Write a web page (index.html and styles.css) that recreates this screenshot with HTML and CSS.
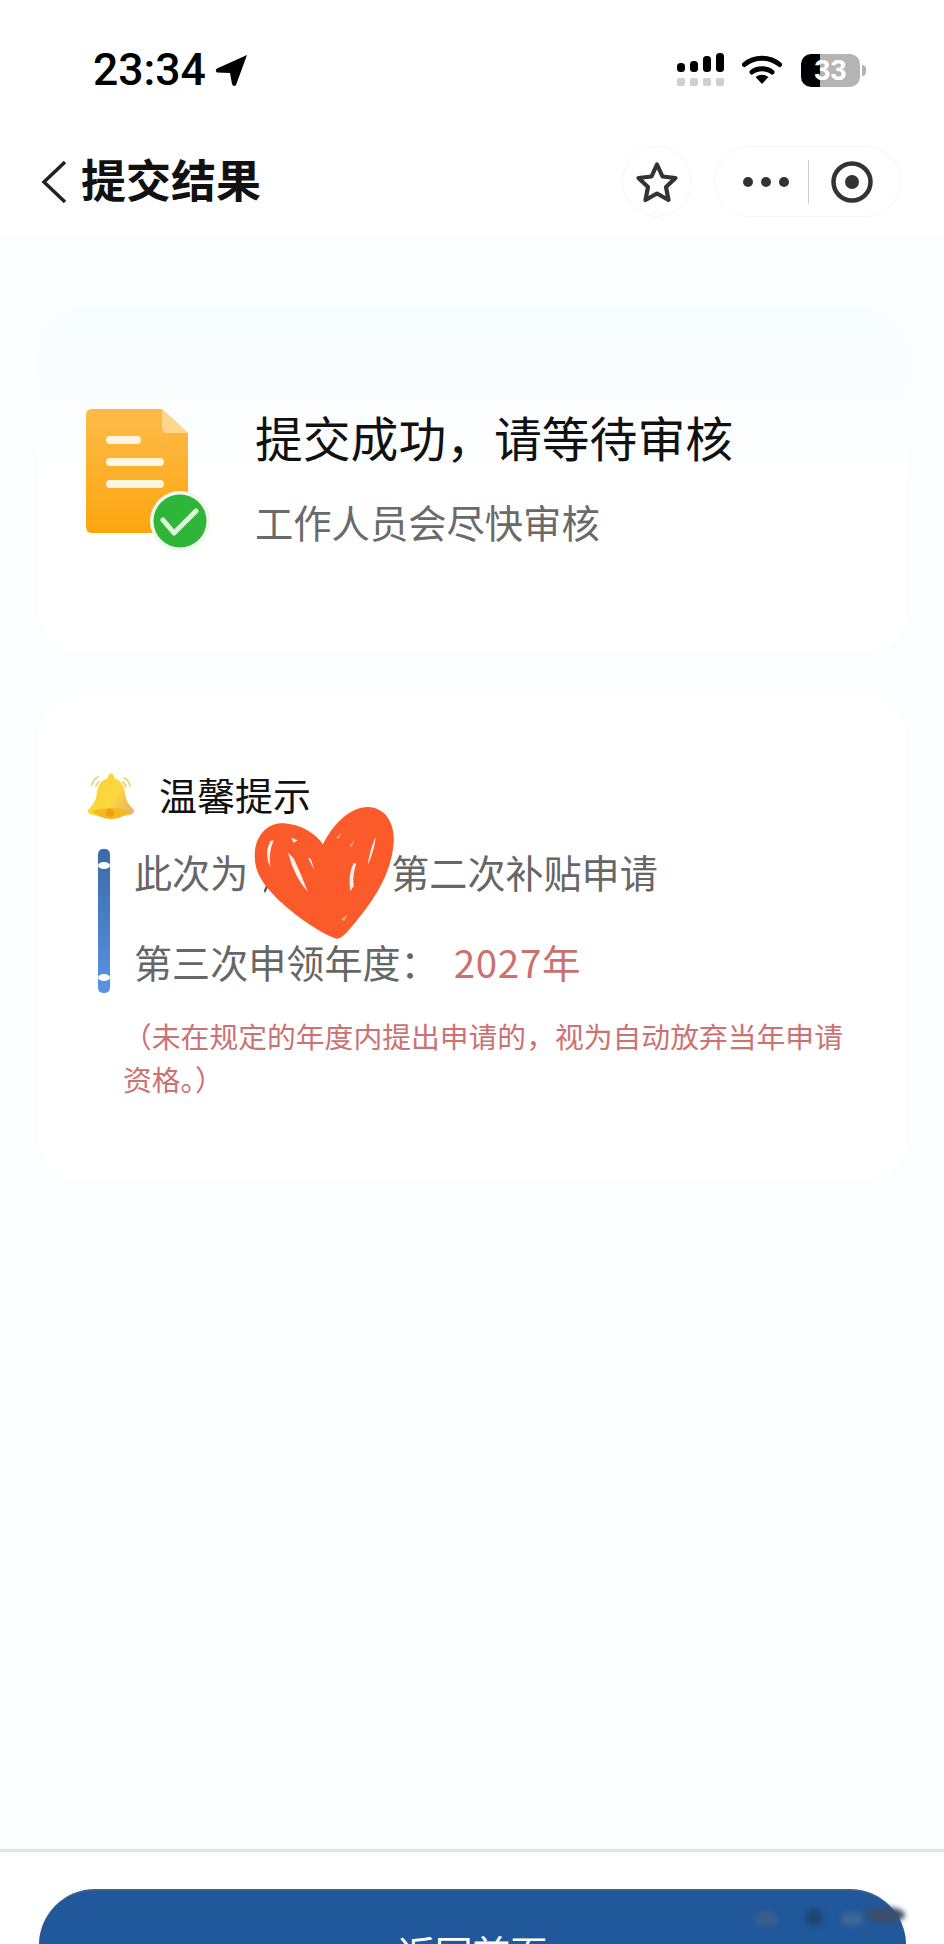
FILE: index.html
```html
<!DOCTYPE html>
<html lang="zh-CN">
<head>
<meta charset="utf-8">
<title>提交结果</title>
<link rel="stylesheet" href="styles.css">
</head>
<body>
<div class="page">
  <header class="top">
    <div class="status">
      <div class="clock">
        <span class="time">23:34</span>
        <svg class="arrow" width="33" height="33" viewBox="0 0 33 33"><path d="M32 1 L21 31 Q18.500 33.500 17 30 L15 19 L2 18.500 Q-0.500 16.500 2 14.500 Z" fill="#000"/></svg>
      </div>
      <div class="indicators">
        <svg class="signal" width="48" height="34" viewBox="0 0 48 34">
          <rect x="0" y="10" width="8" height="9" rx="3.500" fill="#000"/>
          <rect x="13" y="8" width="8" height="11" rx="3.500" fill="#000"/>
          <rect x="26" y="3" width="8" height="16" rx="3.500" fill="#000"/>
          <rect x="39" y="0" width="8" height="19" rx="3.500" fill="#000"/>
          <rect x="0" y="25" width="8" height="8" rx="2" fill="#cfcfcf"/>
          <rect x="13" y="25" width="8" height="8" rx="2" fill="#cfcfcf"/>
          <rect x="26" y="25" width="8" height="8" rx="2" fill="#cfcfcf"/>
          <rect x="39" y="25" width="8" height="8" rx="2" fill="#cfcfcf"/>
        </svg>
        <svg class="wifi" width="40" height="30" viewBox="0 0 40 30">
          <path d="M2.500 9.500 C12 1 28 1 37.500 9.500" fill="none" stroke="#000" stroke-width="5" stroke-linecap="round"/>
          <path d="M10 17 C15 12.500 25 12.500 30 17" fill="none" stroke="#000" stroke-width="5" stroke-linecap="round"/>
          <path d="M13.500 22 Q20 17.500 26.500 22 L20 29 Z" fill="#000"/>
        </svg>
        <div class="battery"><span class="battery-level">33</span></div>
        <span class="battery-nub"></span>
      </div>
    </div>
    <nav class="nav">
      <svg class="back" width="26" height="44" viewBox="0 0 26 44"><path d="M24 2 L3 22 L24 42" fill="none" stroke="#222" stroke-width="3.500"/></svg>
      <h1 class="nav-title">提交结果</h1>
      <div class="fav">
        <svg width="44" height="42" viewBox="0 0 44 42"><path d="M22 3.500 L27.500 15.500 L40.500 17 L31 26 L33.500 39 L22 32.500 L10.500 39 L13 26 L3.500 17 L16.500 15.500 Z" fill="none" stroke="#333" stroke-width="4.200" stroke-linejoin="round"/></svg>
      </div>
      <div class="capsule">
        <span class="dots"><i></i><i></i><i></i></span>
        <span class="divider"></span>
        <svg width="42" height="42" viewBox="0 0 42 42"><circle cx="21" cy="21" r="18.500" fill="none" stroke="#333" stroke-width="4.500"/><circle cx="21" cy="21" r="7" fill="#333"/></svg>
      </div>
    </nav>
  </header>

  <main class="main">
    <section class="card card-result">
      <svg class="doc" width="126" height="146" viewBox="0 0 126 146">
        <defs>
          <linearGradient id="docFill" x1="0" y1="0" x2="0" y2="1">
            <stop offset="0" stop-color="#fdbb49"/>
            <stop offset="1" stop-color="#fda60f"/>
          </linearGradient>
        </defs>
        <path d="M6 1 H76 L102 25 V119 Q102 125 96 125 H6 Q0 125 0 119 V7 Q0 1 6 1 Z" fill="url(#docFill)"/>
        <path d="M76 1 L102 25 H82 Q76 25 76 19 Z" fill="#fdd78e"/>
        <rect x="20" y="28" width="35" height="8" rx="4" fill="#fff6e2"/>
        <rect x="20" y="50" width="58" height="8" rx="4" fill="#fff6e2"/>
        <rect x="20" y="72" width="58" height="8" rx="4" fill="#fff6e2"/>
        <circle cx="94" cy="113" r="30" fill="#eef9ec"/>
        <circle cx="94" cy="113" r="26.500" fill="#2fb53a"/>
        <path d="M77 112 L88 125 L110 103" fill="none" stroke="#dff5dc" stroke-width="5" stroke-linecap="round" stroke-linejoin="round"/>
      </svg>
      <div class="result-text">
        <h2 class="result-title">提交成功&#xFF0C;请等待审核</h2>
        <p class="result-sub">工作人员会尽快审核</p>
      </div>
    </section>

    <section class="card card-tip">
      <div class="tip-head">
        <svg width="48" height="48" viewBox="0 0 48 48">
          <defs>
            <linearGradient id="bellFill" x1="0" y1="0" x2="1" y2="0.600">
              <stop offset="0" stop-color="#fbd02c"/>
              <stop offset="0.650" stop-color="#fcd83f"/>
              <stop offset="1" stop-color="#ecb860"/>
            </linearGradient>
          </defs>
          <path d="M24 0.500 Q27 0.500 27 5 Q37 8 38 20 Q39 30 47 37 Q48 41 42 42 Q24 46 6 42 Q0 41 1 37 Q9 30 10 20 Q11 8 21 5 Q21 0.500 24 0.500 Z" fill="url(#bellFill)"/>
          <path d="M5 38 Q24 32 43 38 Q35 46 24 46 Q13 46 5 38 Z" fill="#f5b81e"/>
          <circle cx="23" cy="40" r="4" fill="#e9a314"/>
          <path d="M5 12 Q6 6 11 4 M9 13 Q10 10 12 9 M43 13 Q42 7 37 5 M39 14 Q38 11 36 9" fill="none" stroke="#ecd27a" stroke-width="1.800" stroke-linecap="round"/>
        </svg>
        <h3 class="tip-title">温馨提示</h3>
      </div>
      <div class="tip-body">
        <span class="tip-bar"></span>
        <div class="tip-lines">
          <p class="tip-line">此次为<span class="masked"></span>第二次补贴申请</p>
          <p class="tip-line">第三次申领年度&#xFF1A;<span class="year">2027年</span></p>
        </div>
      </div>
      <p class="tip-note">&#xFF08;未在规定的年度内提出申请的&#xFF0C;视为自动放弃当年申请资格。&#xFF09;</p>
      <svg class="heart" width="148" height="136" viewBox="640 195 444 408">
        <path d="M672 450 Q678 438 680 428 L686 430 Q684 444 676 456 Z" fill="#555"/>
        <path d="M850 310 C880 250 930 198 985 198 C1040 200 1066 250 1062 305 C1055 400 1000 480 950 540 C925 572 905 595 890 593 C840 575 760 520 710 470 C665 425 640 385 646 330 C652 275 690 243 735 247 C785 252 825 275 850 310 Z" fill="#fb5a2b"/>
        <path d="M692 300 Q672 340 692 378 Q686 335 702 298 Z M745 335 Q765 410 804 452 Q785 400 762 352 Z M1006 292 Q990 330 984 372 Q1002 335 1008 292 Z M942 366 Q924 400 932 450 L942 436 Q938 400 950 368 Z M755 290 L774 298 L762 305 Z M805 350 L824 388 L814 355 Z" fill="#fff" fill-opacity="0.900"/>
        <path d="M905 535 L924 520 L914 540 Z M890 290 L905 275 L897 295 Z M930 315 L945 295 L936 318 Z" fill="#fda58a"/>
      </svg>
    </section>
  </main>

  <footer class="footer">
    <button class="home-btn" type="button">返回首页</button>
    <svg class="smudge" width="170" height="36" viewBox="0 0 170 36">
      <defs><filter id="soft" x="-30%" y="-60%" width="160%" height="220%"><feGaussianBlur stdDeviation="2.500"/></filter></defs>
      <g filter="url(#soft)">
        <ellipse cx="18" cy="20" rx="12" ry="8" fill="#3f5f88" fill-opacity="0.800"/>
        <ellipse cx="66" cy="18" rx="9" ry="9" fill="#1c4672"/>
        <ellipse cx="104" cy="20" rx="11" ry="7" fill="#466a95" fill-opacity="0.800"/>
        <ellipse cx="137" cy="16" rx="20" ry="8" fill="#3a4f6d"/>
      </g>
    </svg>
  </footer>
</div>
</body>
</html>
```

FILE: styles.css
```css
* { box-sizing: border-box; }
html, body { margin: 0; padding: 0; }
body {
  font-family: "Noto Sans CJK SC", "Liberation Sans", sans-serif;
  color: #111;
}
h1, h2, h3, p { margin: 0; font-weight: 400; }

.page {
  width: 944px;
  height: 1944px;
  overflow: hidden;
  display: flex;
  flex-direction: column;
  background: #fcfdff;
}

.top { background: #fff; height: 237px; }

.status {
  height: 108px;
  padding: 32px 78px 0 93px;
  display: flex;
  justify-content: space-between;
  align-items: center;
}
.clock { display: flex; align-items: center; gap: 9px; }
.time {
  font-family: Roboto, "Liberation Sans", sans-serif;
  font-size: 44.500px;
  font-weight: 500;
  line-height: 44px;
  color: #000;
}
.arrow { display: block; }
.indicators { display: flex; align-items: center; }
.signal { display: block; }
.wifi { display: block; margin-left: 17px; }
.battery {
  margin-left: 19px;
  width: 59px;
  height: 33px;
  border-radius: 10px;
  background: linear-gradient(90deg, #000 0, #000 19px, #b4b4b4 19px);
  display: flex;
  align-items: center;
  justify-content: center;
}
.battery-level {
  font-family: "Liberation Sans", sans-serif;
  font-size: 29px;
  font-weight: 700;
  line-height: 33px;
  color: #fff;
}
.battery-nub {
  width: 4px;
  height: 11px;
  margin-left: 2px;
  border-radius: 0 4px 4px 0;
  background: #b4b4b4;
}

.nav {
  height: 129px;
  padding: 38px 43px 20px 41px;
  display: flex;
  align-items: center;
}
.back { display: block; flex: none; }
.nav-title {
  margin-left: 14px;
  padding-bottom: 5px;
  font-size: 45px;
  font-weight: 700;
  line-height: 60px;
  color: #111;
  flex: 1;
}
.fav {
  width: 70px;
  height: 71px;
  border: 1px solid #f6f6f6;
  border-radius: 50%;
  display: flex;
  align-items: center;
  justify-content: center;
}
.capsule {
  margin-left: 22px;
  width: 187px;
  height: 71px;
  border: 1px solid #f6f6f6;
  border-radius: 36px;
  padding-left: 28px;
  display: flex;
  align-items: center;
}
.dots { display: flex; gap: 8px; }
.dots i {
  display: block;
  width: 10px;
  height: 10px;
  border-radius: 50%;
  background: #333;
}
.divider {
  width: 1px;
  height: 44px;
  margin: 0 22px 0 19px;
  background: #cfcfcf;
}

.main {
  flex: 1;
  padding: 71px 37px 0 38px;
  display: flex;
  flex-direction: column;
  gap: 42px;
}
.card {
  width: 869px;
  border-radius: 44px;
  background: #fff;
}
.card-result {
  height: 344px;
  padding: 100px 0 0 48px;
  display: flex;
  align-items: flex-start;
  background: linear-gradient(180deg, #f8fdfe 0, #fbfdfe 100px, #fff 180px);
}
.doc { display: block; flex: none; }
.result-text { margin: 1px 0 0 43px; }
.result-title {
  font-size: 47.800px;
  line-height: 56px;
  color: #111;
}
.result-sub {
  margin-top: 34px;
  font-size: 38.300px;
  line-height: 46px;
  color: #6a6a6a;
}

.card-tip {
  position: relative;
  height: 486px;
  padding: 79px 0 0 49px;
}
.tip-head { display: flex; align-items: center; gap: 24px; height: 47px; }
.tip-title { padding-bottom: 6px; font-size: 38px; line-height: 47px; color: #111; }
.tip-body { display: flex; gap: 24px; margin: 29px 0 0 11px; }
.tip-bar {
  position: relative;
  flex: none;
  width: 12px;
  height: 144px;
  border-radius: 5px;
  background: linear-gradient(180deg, #3a6ba6 0, #5a92e6 100%);
}
.tip-bar::before, .tip-bar::after {
  content: "";
  position: absolute;
  left: 0;
  width: 12px;
  height: 7px;
  border-radius: 50%;
  background: #fff;
}
.tip-bar::before { top: 13px; }
.tip-bar::after { top: 125px; }
.tip-lines { display: flex; flex-direction: column; gap: 37px; margin-top: -3px; }
.tip-line {
  font-size: 38.100px;
  line-height: 52px;
  color: #666;
  white-space: nowrap;
}
.masked { display: inline-block; width: 143px; }
.year { margin-left: 15px; font-size: 38.500px; letter-spacing: 0.750px; color: #c9716f; }
.tip-note {
  width: 737px;
  margin: 21px 0 0 36px;
  font-size: 28.800px;
  line-height: 43px;
  color: #cc7272;
}
.heart { position: absolute; left: 215px; top: 112px; display: block; }

.footer {
  position: relative;
  height: 95px;
  overflow: hidden;
  background: #fff;
  border-top: 3px solid #e4e4e4;
  padding: 37px 38px 0 39px;
}
.home-btn {
  display: block;
  width: 867px;
  height: 124px;
  border: 0;
  border-top: 2px solid #3c6089;
  border-radius: 56px;
  padding: 0;
  background: #20589b;
  color: #fff;
  font-family: inherit;
  font-size: 37.500px;
  line-height: 120px;
  text-align: center;
}
.smudge { position: absolute; right: 26px; top: 47px; display: block; }
```
